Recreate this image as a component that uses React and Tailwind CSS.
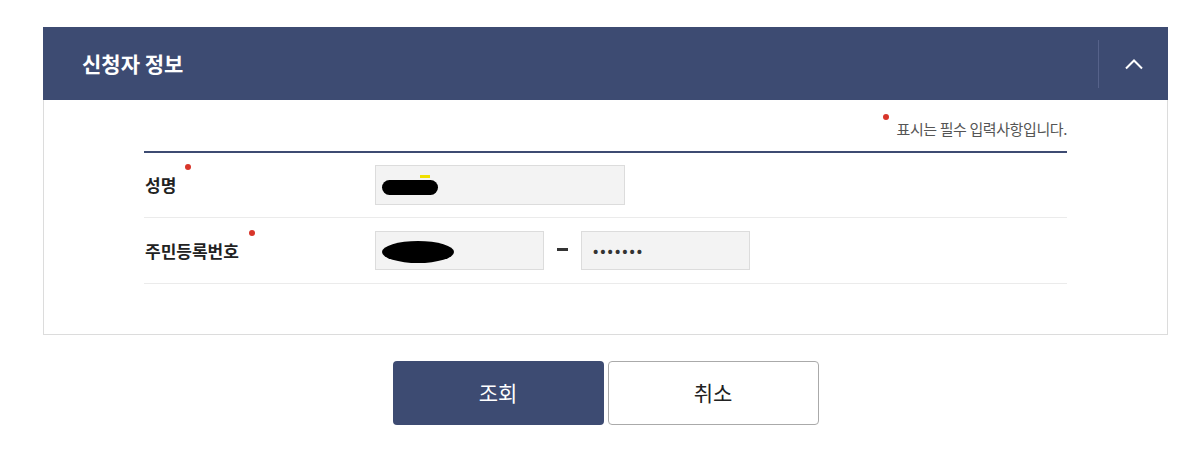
import React from 'react';

export default function App() {
    return (
        <div className="w-[1188px] h-[453px] bg-white pt-[27px] pl-[43px]" style={{ fontFamily: '"Noto Sans CJK KR", "Noto Sans", sans-serif' }}>
            <div className="w-[1125px]">
                {/* Header */}
                <div className="h-[73px] bg-[#3d4b72] flex items-center">
                    <h2 className="flex-1 pl-[39px] text-white text-[21px] font-bold">신청자 정보</h2>
                    <div className="w-px h-[48px] bg-[#56628a]" />
                    <button className="w-[69px] h-full flex items-center justify-center">
                        <svg width="20" height="12" viewBox="0 0 20 12" fill="none">
                            <path d="M2 10.5 L10 2.5 L18 10.5" stroke="white" strokeWidth="2" />
                        </svg>
                    </button>
                </div>

                {/* Body */}
                <div className="h-[235px] border border-t-0 border-[#dcdcdc] pl-[100px] pr-[100px]">
                    <div className="h-[51px] flex items-end justify-end pb-[15px]">
                        <span className="w-[6px] h-[6px] rounded-full bg-[#d8352a] self-start mt-[14px] mr-[8px]" />
                        <span className="text-[15px] text-[#555] tracking-[-0.4px] leading-none">표시는 필수 입력사항입니다.</span>
                    </div>
                    <div className="border-t-2 border-[#3d4b72]">
                        <div className="h-[65px] border-b border-[#ebebeb] flex items-center">
                            <div className="w-[231px] pl-px relative">
                                <span className="text-[17px] font-bold text-[#222]">성명</span>
                                <span className="absolute left-[41px] top-[-8px] w-[6px] h-[6px] rounded-full bg-[#d8352a]" />
                            </div>
                            <div className="w-[250px] h-[40px] bg-[#f3f3f3] border border-[#dcdcdc] flex items-center pl-[6px] relative">
                                <div className="w-[56px] h-[15px] rounded-full bg-black mt-[4px]" />
                                <div className="absolute left-[44px] top-[9px] w-[10px] h-[3px] bg-[#f0e000]" />
                            </div>
                        </div>
                        <div className="h-[66px] border-b border-[#ebebeb] flex items-center">
                            <div className="w-[231px] pl-px relative">
                                <span className="text-[17px] font-bold text-[#222]">주민등록번호</span>
                                <span className="absolute left-[105px] top-[-8px] w-[6px] h-[6px] rounded-full bg-[#d8352a]" />
                            </div>
                            <div className="w-[169px] h-[39px] bg-[#f3f3f3] border border-[#dcdcdc] flex items-center pl-[6px]">
                                <div className="w-[72px] h-[22px] rounded-[50%] bg-black mt-[3px]" />
                            </div>
                            <div className="w-[37px] flex justify-center">
                                <span className="w-[11px] h-[3px] bg-[#333] -mt-[2px]" />
                            </div>
                            <div className="w-[169px] h-[39px] bg-[#f3f3f3] border border-[#dcdcdc] flex items-center pl-[11px]">
                                <span className="text-[14px] text-[#333] tracking-[2px] font-bold">•••••••</span>
                            </div>
                        </div>
                    </div>
                </div>

                {/* Buttons */}
                <div className="mt-[26px] flex justify-center gap-[4px]">
                    <button className="w-[211px] h-[64px] rounded-[4px] bg-[#3d4b72] text-white text-[21px] font-normal">조회</button>
                    <button className="w-[211px] h-[64px] rounded-[4px] bg-white border border-[#aaa] text-[#222] text-[21px] font-normal">취소</button>
                </div>
            </div>
        </div>
    );
}
